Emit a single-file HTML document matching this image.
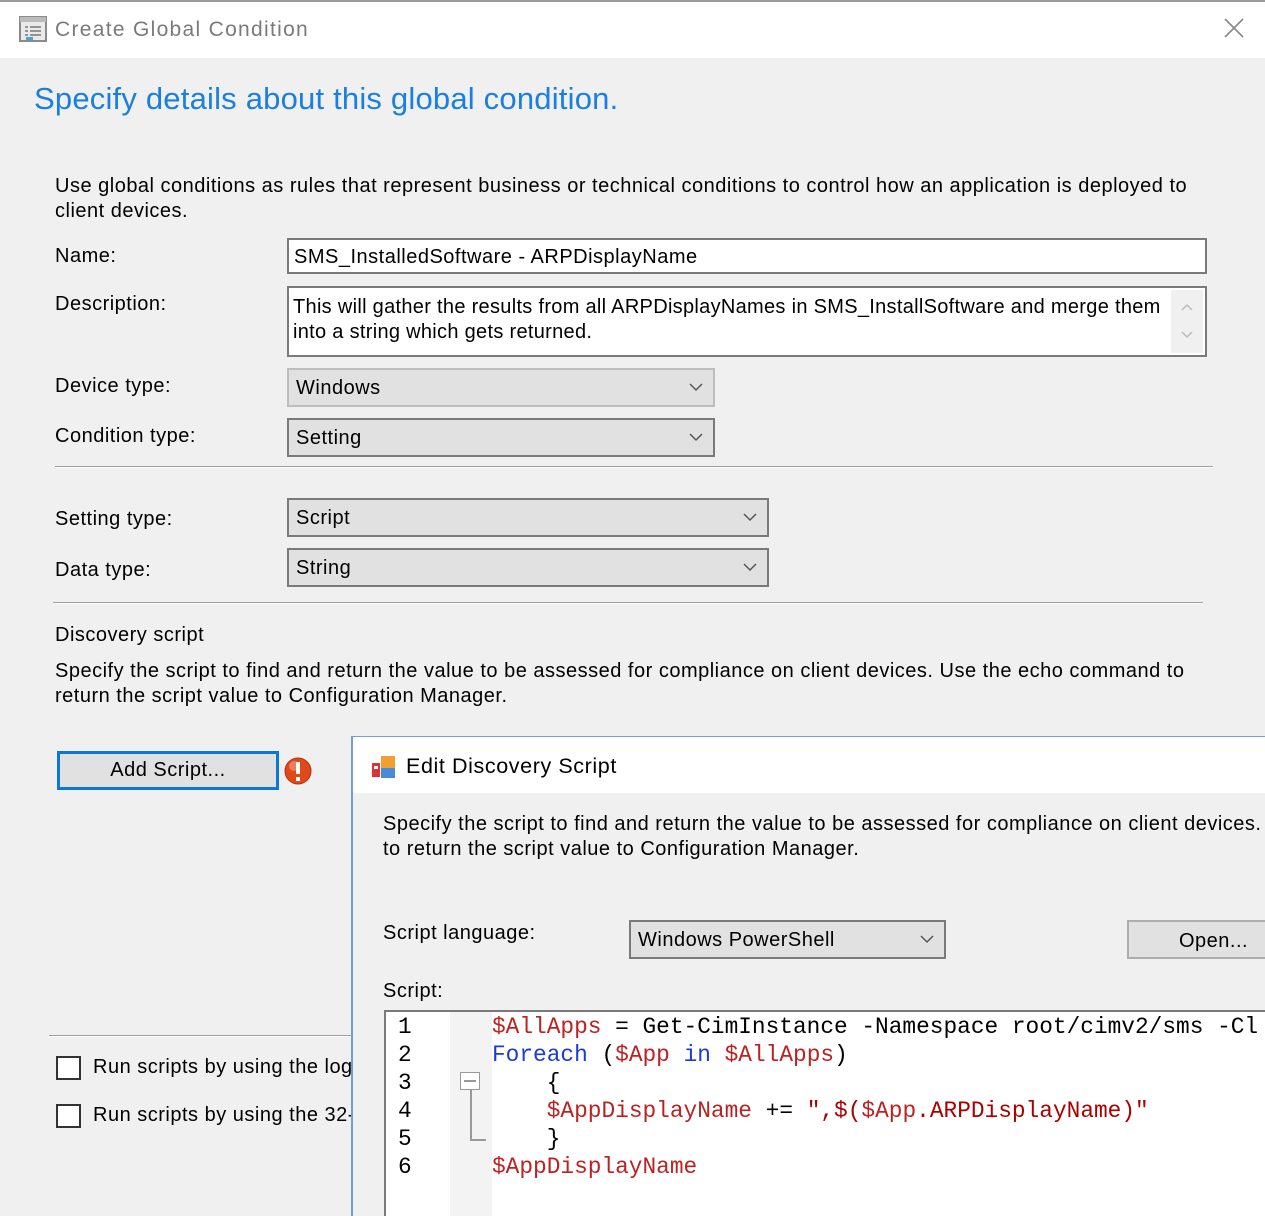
<!DOCTYPE html>
<html><head><meta charset="utf-8"><style>
*{margin:0;padding:0;box-sizing:border-box}
body{width:1265px;height:1210px;overflow:hidden;background:#f0f0f0;font-family:"Liberation Sans",sans-serif;font-size:20px;color:#000;position:relative;letter-spacing:0.5px}
.a{position:absolute;white-space:nowrap}
.box{position:absolute;border:2px solid #7a7a7a;background:#fff}
.cb{position:absolute;border:2px solid #7a7a7a;background:#e1e1e1}
.cb span{position:absolute;left:7px;top:7px}
.chev{position:absolute;right:10px;top:12px;width:14px;height:10px}
.hr{position:absolute;height:2px;background:#a0a0a0;border-bottom:1px solid #fff}
.mono{font-family:"Liberation Mono",monospace;font-size:22.8px;letter-spacing:0}
</style></head><body>
<div class="a" style="left:0;top:0;width:1265px;height:58px;background:#fff;border-top:2px solid #9a9a9a"></div>
<svg class="a" style="left:19px;top:16px" width="28" height="26" viewBox="0 0 28 26"><rect x="1" y="1" width="26" height="24" fill="#eaeaea" stroke="#8a8a8a" stroke-width="2"/><rect x="1" y="1" width="26" height="5" fill="#bbb"/><path d="M6 11h3M11 11h11M6 15h3M11 15h11M6 19h3M11 19h11" stroke="#777" stroke-width="1.5"/><rect x="7" y="21" width="7" height="3" fill="#4aa3df"/></svg>
<div class="a" style="left:55px;top:18px;color:#7a7a7a;font-size:21px;letter-spacing:1.3px">Create Global Condition</div>
<svg class="a" style="left:1224px;top:18px" width="20" height="20"><path d="M1 1L19 19M19 1L1 19" stroke="#888" stroke-width="1.6"/></svg>
<div class="a" style="left:34px;top:81px;color:#1a7fe0;font-size:31px;letter-spacing:0.2px">Specify details about this global condition.</div>
<div class="a" style="left:55px;top:174px;line-height:25px">Use global conditions as rules that represent business or technical conditions to control how an application is deployed to<br>client devices.</div>
<div class="a" style="left:55px;top:245px">Name:</div>
<div class="box" style="left:287px;top:238px;width:920px;height:36px"><span class="a" style="left:5px;top:6px">SMS_InstalledSoftware - ARPDisplayName</span></div>
<div class="a" style="left:55px;top:293px">Description:</div>
<div class="box" style="left:287px;top:286px;width:920px;height:71px"><span class="a" style="left:4px;top:7px;line-height:25px;letter-spacing:0.3px">This will gather the results from all ARPDisplayNames in SMS_InstallSoftware and merge them<br>into a string which gets returned.</span><div class="a" style="right:2px;top:2px;width:32px;height:63px;background:#f0f0f0"><svg class="a" style="left:9px;top:12px" width="14" height="40"><path d="M2 8l5-5 5 5M2 30l5 5 5-5" fill="none" stroke="#bbb" stroke-width="1.5"/></svg></div></div>
<div class="a" style="left:55px;top:375px">Device type:</div>
<div class="cb" style="left:287px;top:368px;width:428px;height:39px;border-color:#bdbdbd"><span>Windows</span><svg class="chev" viewBox="0 0 14 10"><path d="M1 2l6 6 6-6" fill="none" stroke="#555" stroke-width="1.5"/></svg></div>
<div class="a" style="left:55px;top:425px">Condition type:</div>
<div class="cb" style="left:287px;top:418px;width:428px;height:39px"><span>Setting</span><svg class="chev" viewBox="0 0 14 10"><path d="M1 2l6 6 6-6" fill="none" stroke="#555" stroke-width="1.5"/></svg></div>
<div class="hr" style="left:55px;top:466px;width:1158px"></div>
<div class="a" style="left:55px;top:508px">Setting type:</div>
<div class="cb" style="left:287px;top:498px;width:482px;height:39px"><span>Script</span><svg class="chev" viewBox="0 0 14 10"><path d="M1 2l6 6 6-6" fill="none" stroke="#555" stroke-width="1.5"/></svg></div>
<div class="a" style="left:55px;top:559px">Data type:</div>
<div class="cb" style="left:287px;top:548px;width:482px;height:39px"><span>String</span><svg class="chev" viewBox="0 0 14 10"><path d="M1 2l6 6 6-6" fill="none" stroke="#555" stroke-width="1.5"/></svg></div>
<div class="hr" style="left:53px;top:602px;width:1150px"></div>
<div class="a" style="left:55px;top:624px">Discovery script</div>
<div class="a" style="left:55px;top:659px;line-height:25px">Specify the script to find and return the value to be assessed for compliance on client devices. Use the echo command to<br>return the script value to Configuration Manager.</div>
<div class="a" style="left:57px;top:751px;width:222px;height:39px;border:3px solid #0a78d7;background:#e1e1e1;text-align:center;line-height:33px">Add Script...</div>
<svg class="a" style="left:283px;top:756px" width="30" height="30"><circle cx="15" cy="15" r="13" fill="#e04a1a" stroke="#b03010"/><circle cx="11" cy="10" r="5" fill="#f5a080" opacity=".6"/><rect x="13" y="6" width="4" height="12" fill="#fff"/><rect x="13" y="21" width="4" height="4" fill="#fff"/></svg>
<div class="hr" style="left:49px;top:1035px;width:305px"></div>
<div class="a" style="left:56px;top:1056px;width:25px;height:24px;border:2px solid #333;background:#fff"></div>
<div class="a" style="left:93px;top:1056px">Run scripts by using the logged on</div>
<div class="a" style="left:56px;top:1104px;width:25px;height:24px;border:2px solid #333;background:#fff"></div>
<div class="a" style="left:93px;top:1104px">Run scripts by using the 32-bit</div>
<!-- edit dialog -->
<div class="a" style="left:351px;top:736px;width:920px;height:480px;background:#f0f0f0;border-left:2px solid #6f9fd8;border-top:1px solid #6f9fd8;overflow:hidden">
 <div class="a" style="left:0;top:0;width:920px;height:56px;background:#fff"></div>
 <svg class="a" style="left:18px;top:17px" width="28" height="26"><rect x="1" y="9" width="8" height="14" fill="#d33"/><rect x="10" y="2" width="14" height="12" fill="#f0a030"/><rect x="10" y="14" width="14" height="10" fill="#4a8ad8"/><rect x="3" y="12" width="4" height="3" fill="#fff"/></svg>
 <div class="a" style="left:53px;top:17px;font-size:21.5px;letter-spacing:0.6px">Edit Discovery Script</div>
 <div class="a" style="left:30px;top:75px;line-height:25px">Specify the script to find and return the value to be assessed for compliance on client devices. Use the echo command<br>to return the script value to Configuration Manager.</div>
 <div class="a" style="left:30px;top:185px">Script language:</div>
 <div class="cb" style="left:276px;top:183px;width:317px;height:39px"><span>Windows PowerShell</span><svg class="chev" viewBox="0 0 14 10"><path d="M1 2l6 6 6-6" fill="none" stroke="#555" stroke-width="1.5"/></svg></div>
 <div class="a" style="left:774px;top:183px;width:200px;height:39px;border:2px solid #adadad;background:#e1e1e1;padding:8px 0 0 50px">Open...</div>
 <div class="a" style="left:30px;top:243px">Script:</div>
 <div class="a" style="left:31px;top:273px;width:900px;height:220px;border:2px solid #7a7a7a;background:#fff">
  <div class="a" style="left:64px;top:0;width:42px;height:220px;background:#f3f3f3"></div>
  <div class="a mono" style="left:12px;top:1px;line-height:28px">1<br>2<br>3<br>4<br>5<br>6</div>
  <div class="a" style="left:74px;top:60px;width:20px;height:18px;border:1.5px solid #999;background:#fff"></div>
  <div class="a" style="left:78px;top:68px;width:12px;height:1.5px;background:#999"></div>
  <div class="a" style="left:84px;top:78px;width:1.5px;height:50px;background:#999"></div>
  <div class="a" style="left:84px;top:127px;width:16px;height:1.5px;background:#999"></div>
  <div class="a mono" style="left:106px;top:1px;line-height:28px;white-space:pre"><span style="color:#b22">$AllApps</span> = Get-CimInstance -Namespace root/cimv2/sms -Cl
<span style="color:#1a3bd6">Foreach</span> (<span style="color:#b22">$App</span> <span style="color:#1a3bd6">in</span> <span style="color:#b22">$AllApps</span>)
    {
    <span style="color:#b22">$AppDisplayName</span> += <span style="color:#a00">",$(<span style="color:#b22">$App</span>.ARPDisplayName)"</span>
    }
<span style="color:#b22">$AppDisplayName</span></div>
 </div>
</div>
</body></html>
